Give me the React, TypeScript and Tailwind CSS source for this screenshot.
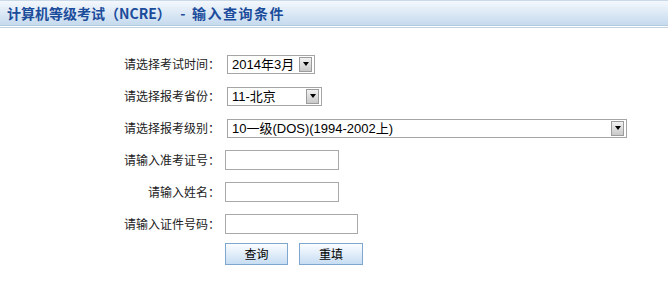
import React from 'react';

const FakeSelect: React.FC<{ value: string; width: string }> = ({ value, width }) => (
  <div
    className={`${width} ml-[2px] h-[19px] border border-[#a5a5a5] bg-white flex items-center justify-between pl-[4px] pr-[2px] text-[13px] text-black`}
    style={{ fontFamily: '"Liberation Sans", "Noto Sans CJK SC", sans-serif' }}
  >
    <span className="leading-none whitespace-nowrap">{value}</span>
    <span className="w-[13px] h-[15px] border border-[#9c9c9c] bg-gradient-to-b from-[#f2f2f2] to-[#c9c9c9] flex items-center justify-center">
      <span className="w-0 h-0 border-l-[3.5px] border-r-[3.5px] border-t-[4px] border-l-transparent border-r-transparent border-t-black" />
    </span>
  </div>
);

const Row: React.FC<{ label: string; children: React.ReactNode }> = ({ label, children }) => (
  <>
    <div className="h-[32px] flex items-center justify-end text-[12px] text-[#222]">{label}</div>
    <div className="h-[32px] flex items-center">{children}</div>
  </>
);

const App: React.FC = () => {
  return (
    <div
      className="w-[668px] h-[306px] bg-white"
      style={{ fontFamily: '"Noto Sans CJK SC", "Liberation Sans", sans-serif' }}
    >
      <div className="h-[26px] border-t border-b border-t-[#c9d9e8] border-b-[#b4cadf] bg-gradient-to-b from-[#f4f8fd] to-[#c5daee] flex items-center pl-[7px]">
        <span className="text-[14px] font-bold text-[#1b4c9b] whitespace-pre leading-none">
          {'计算机等级考试（NCRE）   -  '}
          <span className="tracking-[1.5px]">输入查询条件</span>
        </span>
      </div>
      <div className="mt-px h-px bg-[#c3d3df]" />

      <div className="pt-[20px] grid grid-cols-[220px_1fr] gap-x-[5px]">
        <Row label="请选择考试时间：">
          <FakeSelect value="2014年3月" width="w-[88px]" />
        </Row>
        <Row label="请选择报考省份：">
          <FakeSelect value="11-北京" width="w-[95px]" />
        </Row>
        <Row label="请选择报考级别：">
          <FakeSelect value="10一级(DOS)(1994-2002上)" width="w-[400px]" />
        </Row>
        <Row label="请输入准考证号：">
          <input className="w-[114px] h-[20px] border border-[#a9a9a9] bg-white outline-none" />
        </Row>
        <Row label="请输入姓名：">
          <input className="w-[114px] h-[20px] border border-[#a9a9a9] bg-white outline-none" />
        </Row>
        <Row label="请输入证件号码：">
          <input className="w-[133px] h-[20px] border border-[#a9a9a9] bg-white outline-none" />
        </Row>
        <div className="h-[28px]" />
        <div className="h-[28px] flex items-center gap-[11px]">
          <button className="w-[63px] h-[22px] border border-[#7ea6cf] bg-gradient-to-b from-[#fbfdff] to-[#c7ddf3] text-[12px] text-black leading-none">
            查询
          </button>
          <button className="w-[64px] h-[22px] border border-[#7ea6cf] bg-gradient-to-b from-[#fbfdff] to-[#c7ddf3] text-[12px] text-black leading-none">
            重填
          </button>
        </div>
      </div>
    </div>
  );
};

export default App;
